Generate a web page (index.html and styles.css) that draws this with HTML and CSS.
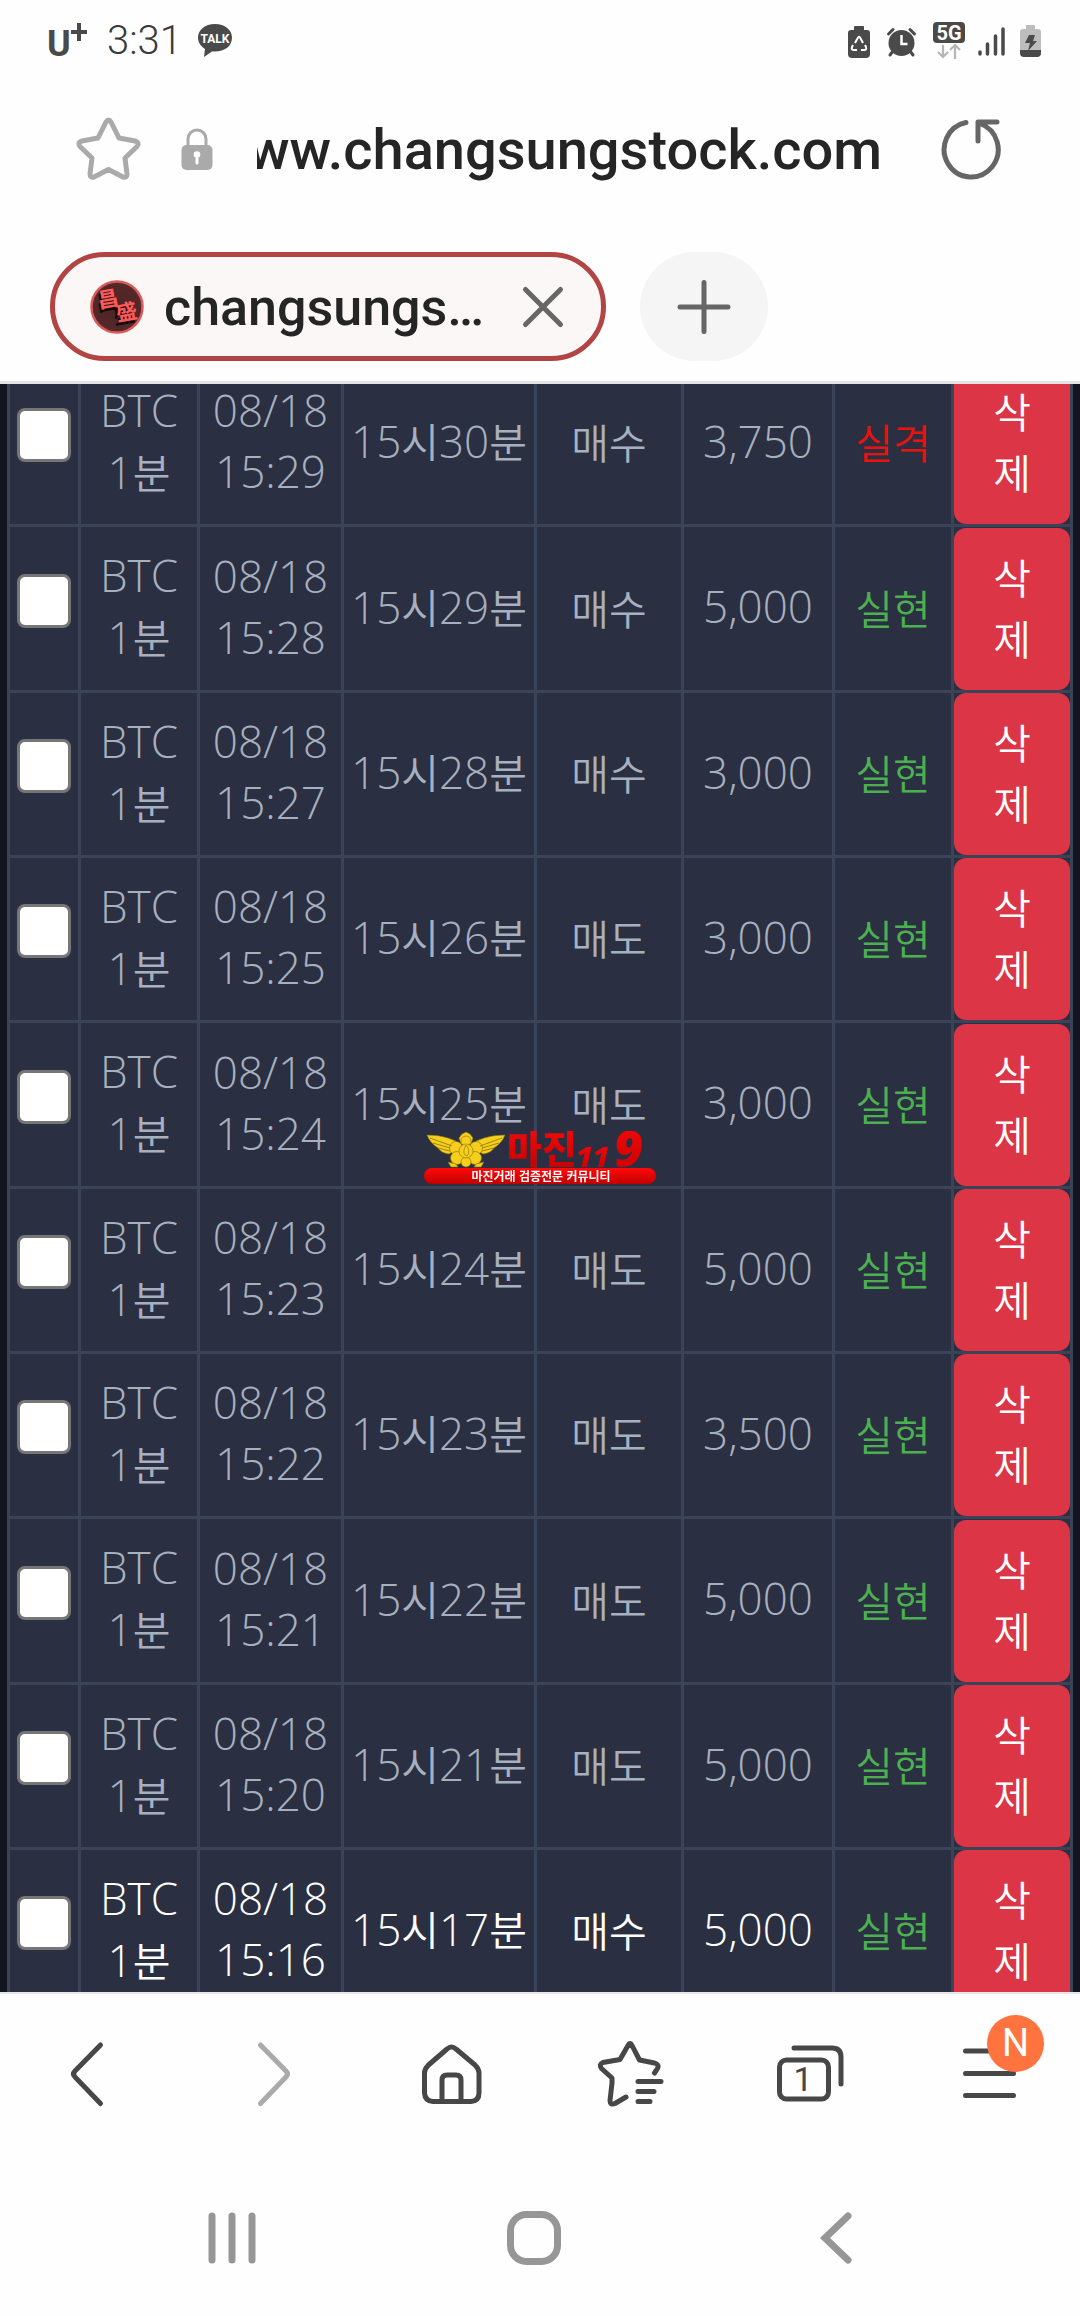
FILE: index.html
```html
<!DOCTYPE html>
<html lang="ko">
<head>
<meta charset="utf-8">
<meta name="viewport" content="width=device-width, initial-scale=1">
<title>changsungstock</title>
<link rel="stylesheet" href="styles.css">
</head>
<body>
<header class="browser-top">
  <div class="status">
    <svg class="carrier" width="44" height="44" viewBox="0 0 44 44" aria-label="U+"><text x="0" y="37" class="carrier-u">U</text><path d="M32 4v18M24 13h16" class="carrier-plus"/></svg>
    <span class="clock">3:31</span>
    <svg class="talk" width="36" height="36" viewBox="0 0 36 36"><path d="M18 1C8 1 1 7 1 14.500c0 5 3 9 7 11.500L7 34l8-5.500c12 1 20-5 20-14C35 7 28 1 18 1z" fill="#4a4a4a"/><text x="18" y="20" class="talk-text">TALK</text></svg>
    <span class="spacer"></span>
    <svg width="200" height="44" viewBox="846 18 200 44">
      <path d="M854 29v-3q0-1 1-1h8q1 0 1 1v3h3q3 0 3 3v21q0 4-4 4h-14q-4 0-4-4V32q0-3 3-3z" fill="#4a4a4a"/>
      <path d="M855 42l3-5.500q1-1.500 2 0l3 5.500M853 44l-1 2q-1 3 2 3h3M865 44l1 2q1 3-2 3h-3" fill="none" stroke="#fff" stroke-width="2"/>
      <circle cx="901.500" cy="42" r="13" fill="#4a4a4a"/><path d="M888.500 33l4.500-4.500M914.500 33l-4.500-4.500M893 50l-3 4M910 50l3 4" stroke="#4a4a4a" stroke-width="3" stroke-linecap="round"/><path d="M901.500 34v9h6" fill="none" stroke="#fff" stroke-width="2.500"/>
      <rect x="933" y="21" width="32" height="21" rx="4" fill="#4a4a4a"/><text x="949" y="39" class="net-text">5G</text>
      <path d="M943 44v12M938 51l5 5 5-5M955 58V45M950 49l5-5 5 5" fill="none" stroke="#b5b5b5" stroke-width="2.200"/>
      <path d="M980 51v2M987.500 43v10M995.500 35v18M1003 28v25" stroke="#4a4a4a" stroke-width="3.500" stroke-linecap="round"/>
      <path d="M1026 28v-3q0-1 1-1h7q1 0 1 1v3h3q3 0 3 3v18h-21V31q0-3 3-3z" fill="#bdbdbd"/><path d="M1020 49h21v3q0 4-4 4h-13q-4 0-4-4z" fill="#4a4a4a"/><path d="M1029 34h6l-2 6h4l-9 10 2-8h-5z" fill="#4a4a4a"/>
    </svg>
  </div>

  <div class="address">
    <button class="icon-btn" aria-label="Bookmark"><svg width="70" height="70" viewBox="0 0 70 70"><path class="star" d="M25 24L33 8q2.500-4 5 0l8 16 16 3q5 1.500 2 5.500L52 44l2 16q0 4-4 3L35.500 55.500 21 63q-4 1-4-3l2-16L7 32.500q-3-4 2-5.500z"/></svg></button>
    <svg class="lock" width="32" height="42" viewBox="0 0 32 42"><path d="M7 20V11a9 9 0 0 1 18 0v9" fill="none" stroke="#aaa" stroke-width="3"/><rect x="0.500" y="17" width="31" height="25" rx="5" fill="#aaa"/><path d="M16 27v8" stroke="#fff" stroke-width="3" stroke-linecap="round"/><circle cx="16" cy="26.500" r="3.300" fill="#fff"/></svg>
    <input class="url" type="text" aria-label="Address" value="www.changsungstock.com">
    <button class="icon-btn reload" aria-label="Reload"><svg width="64" height="64" viewBox="0 0 64 64"><path d="M26 5.500A27 27.500 0 1 0 40 6.500M57 5H38v19" fill="none" stroke="#666" stroke-width="5" stroke-linecap="round" stroke-linejoin="round"/></svg></button>
  </div>

  <div class="tabs">
    <div class="tab">
      <svg width="54" height="54" viewBox="0 0 54 54"><defs><radialGradient id="fav"><stop offset="0" stop-color="#4c2423"/><stop offset="1" stop-color="#55282a"/></radialGradient></defs><circle cx="27" cy="27" r="25.500" fill="url(#fav)" stroke="#d95a5a" stroke-width="2.500"/><g transform="rotate(-10 27 27)"><g class="fav-shadow"><text x="7" y="28">昌</text><text x="22" y="44">盛</text></g><g class="fav-text"><text x="9" y="25">昌</text><text x="25" y="41">盛</text></g></g></svg>
      <span class="tab-title">changsungs…</span>
      <button class="icon-btn" aria-label="Close tab"><svg width="44" height="44" viewBox="0 0 44 44"><path d="M4.500 4.500l35 35M39.500 4.500l-35 35" stroke="#666" stroke-width="5" stroke-linecap="round"/></svg></button>
    </div>
    <button class="new-tab" aria-label="New tab"><svg width="56" height="56" viewBox="0 0 56 56"><path d="M28 3.500v49M4 28h48" stroke="#666" stroke-width="5" stroke-linecap="round"/></svg></button>
  </div>
</header>

<main class="page">
  <table class="orders">
    <colgroup><col class="c-check"><col class="c-item"><col class="c-date"><col class="c-round"><col class="c-side"><col class="c-amount"><col class="c-result"><col class="c-delete"></colgroup>
    <tbody>
      <tr><td class="check"><input type="checkbox" aria-label="15:29"></td><td>BTC<br>1<span class="ko">분</span></td><td>08/18<br>15:29</td><td>15<span class="ko">시</span>30<span class="ko">분</span></td><td class="ko">매수</td><td>3,750</td><td class="ko lose">실격</td><td class="action"><button class="delete">삭<br>제</button></td></tr>
      <tr><td class="check"><input type="checkbox" aria-label="15:28"></td><td>BTC<br>1<span class="ko">분</span></td><td>08/18<br>15:28</td><td>15<span class="ko">시</span>29<span class="ko">분</span></td><td class="ko">매수</td><td>5,000</td><td class="ko win">실현</td><td class="action"><button class="delete">삭<br>제</button></td></tr>
      <tr><td class="check"><input type="checkbox" aria-label="15:27"></td><td>BTC<br>1<span class="ko">분</span></td><td>08/18<br>15:27</td><td>15<span class="ko">시</span>28<span class="ko">분</span></td><td class="ko">매수</td><td>3,000</td><td class="ko win">실현</td><td class="action"><button class="delete">삭<br>제</button></td></tr>
      <tr><td class="check"><input type="checkbox" aria-label="15:25"></td><td>BTC<br>1<span class="ko">분</span></td><td>08/18<br>15:25</td><td>15<span class="ko">시</span>26<span class="ko">분</span></td><td class="ko">매도</td><td>3,000</td><td class="ko win">실현</td><td class="action"><button class="delete">삭<br>제</button></td></tr>
      <tr><td class="check"><input type="checkbox" aria-label="15:24"></td><td>BTC<br>1<span class="ko">분</span></td><td>08/18<br>15:24</td><td>15<span class="ko">시</span>25<span class="ko">분</span></td><td class="ko">매도</td><td>3,000</td><td class="ko win">실현</td><td class="action"><button class="delete">삭<br>제</button></td></tr>
      <tr><td class="check"><input type="checkbox" aria-label="15:23"></td><td>BTC<br>1<span class="ko">분</span></td><td>08/18<br>15:23</td><td>15<span class="ko">시</span>24<span class="ko">분</span></td><td class="ko">매도</td><td>5,000</td><td class="ko win">실현</td><td class="action"><button class="delete">삭<br>제</button></td></tr>
      <tr><td class="check"><input type="checkbox" aria-label="15:22"></td><td>BTC<br>1<span class="ko">분</span></td><td>08/18<br>15:22</td><td>15<span class="ko">시</span>23<span class="ko">분</span></td><td class="ko">매도</td><td>3,500</td><td class="ko win">실현</td><td class="action"><button class="delete">삭<br>제</button></td></tr>
      <tr><td class="check"><input type="checkbox" aria-label="15:21"></td><td>BTC<br>1<span class="ko">분</span></td><td>08/18<br>15:21</td><td>15<span class="ko">시</span>22<span class="ko">분</span></td><td class="ko">매도</td><td>5,000</td><td class="ko win">실현</td><td class="action"><button class="delete">삭<br>제</button></td></tr>
      <tr><td class="check"><input type="checkbox" aria-label="15:20"></td><td>BTC<br>1<span class="ko">분</span></td><td>08/18<br>15:20</td><td>15<span class="ko">시</span>21<span class="ko">분</span></td><td class="ko">매도</td><td>5,000</td><td class="ko win">실현</td><td class="action"><button class="delete">삭<br>제</button></td></tr>
      <tr class="current"><td class="check"><input type="checkbox" aria-label="15:16"></td><td>BTC<br>1<span class="ko">분</span></td><td>08/18<br>15:16</td><td>15<span class="ko">시</span>17<span class="ko">분</span></td><td class="ko">매수</td><td>5,000</td><td class="ko win">실현</td><td class="action"><button class="delete">삭<br>제</button></td></tr>
    </tbody>
  </table>
</main>

<svg class="watermark" width="232" height="54" viewBox="0 0 232 54">
  <defs><linearGradient id="red" x1="0" y1="0" x2="0" y2="1"><stop offset="0" stop-color="#ff0a0a"/><stop offset="1" stop-color="#c00000"/></linearGradient></defs>
  <g fill="#f5cf1b" stroke="#8a7010" stroke-width="0.600">
    <path d="M3 4q12 0 21 3l8 3-1 9-6 4q-8-1-11-6Q6 12 3 4zM81 4q-12 0-21 3l-8 3 1 9 6 4q8-1 11-6 8-5 11-13z"/>
    <path d="M35 7l3-4 4-2 4 2 3 4-2 6H37z"/>
    <circle cx="42" cy="10" r="5"/><circle cx="32" cy="17" r="6.500"/><circle cx="52" cy="17" r="6.500"/><circle cx="33" cy="27" r="6.500"/><circle cx="51" cy="27" r="6.500"/><circle cx="42" cy="31" r="5"/><circle cx="42" cy="20" r="7"/>
    <path d="M42 14q5 6 1 11-6-2-1-11z"/>
    <path d="M24 31l8 2 2 3h-7zM60 31l-8 2-2 3h7z"/>
  </g>
  <path d="M6 7l22 8M9 12l17 5M14 17l12 3M78 7l-22 8M75 12l-17 5M70 17l-12 3" stroke="#8a7010" stroke-width="0.800"/>
  <text x="83" y="32" class="wm-name" fill="url(#red)">마진</text>
  <text x="152" y="36" class="wm-small" fill="url(#red)">11</text>
  <text x="190" y="36" class="wm-big" fill="url(#red)">9</text>
  <rect x="0" y="37" width="232" height="16" rx="8" fill="url(#red)"/>
  <text x="117" y="50" class="wm-sub">마진거래 검증전문 커뮤니티</text>
</svg>

<nav class="toolbar" aria-label="Browser">
  <button class="icon-btn" aria-label="Back"><svg width="80" height="80" viewBox="0 0 80 80"><path d="M50.500 11L25 37q-3 3 0 6l25.500 26.500"/></svg></button>
  <button class="icon-btn faded" aria-label="Forward"><svg width="80" height="80" viewBox="0 0 80 80"><path d="M30.500 11L56 37q3 3 0 6L30.500 69.500"/></svg></button>
  <button class="icon-btn" aria-label="Home"><svg width="80" height="80" viewBox="0 0 80 80"><path d="M37 15q4.500-4 9 0l19 16q4 4 4 8v20q0 8-8 8.500H23q-8-.5-8.500-8.500V39q0-4 4-8zM32 67V46q0-5 5-5h9q5 0 5 5v21"/></svg></button>
  <button class="icon-btn" aria-label="Bookmarks"><svg width="80" height="80" viewBox="0 0 80 80"><path d="M36 63l-11 6.500q-5 2-5-3L22 49v-5L11.500 34.500q-3-4 1.500-6L30 25.500l8-14q2-4 4 0l7.500 14.500 15 3q6 2 2 7l-2 3M48 47.500h23M48 57.500h16M48 67.500h12"/></svg></button>
  <button class="icon-btn" aria-label="Tabs"><svg width="80" height="80" viewBox="0 0 80 80"><rect x="9.500" y="26" width="49" height="39" rx="7"/><path d="M24 14h38q9 0 9 9v27"/><text x="33" y="57" class="tab-count">1</text></svg></button>
  <button class="icon-btn menu" aria-label="Menu"><svg width="80" height="80" viewBox="0 0 80 80"><path d="M15.500 17h48M15.500 39.500h48M15.500 61.500h48"/></svg><span class="badge">N</span></button>
</nav>
<nav class="system" aria-label="System">
  <button class="icon-btn" aria-label="Recents"><svg width="60" height="60" viewBox="0 0 60 60"><path d="M10 8v44M30 8v44M50 8v44"/></svg></button>
  <button class="icon-btn" aria-label="Home screen"><svg width="60" height="60" viewBox="0 0 60 60"><rect x="6.500" y="6.500" width="47" height="47" rx="16"/></svg></button>
  <button class="icon-btn" aria-label="Go back"><svg width="60" height="60" viewBox="0 0 60 60"><path d="M42 8L19 30l23 22"/></svg></button>
</nav>
</body>
</html>
```
FILE: styles.css
```css
* { box-sizing: border-box; }

body {
  margin: 0;
  height: 100vh;
  display: flex;
  flex-direction: column;
  background: #fefefe;
  font-family: Roboto, "Noto Sans CJK KR", sans-serif;
  overflow: hidden;
}

button, input { font: inherit; color: inherit; margin: 0; }
svg { display: block; flex: none; }

.icon-btn {
  display: flex;
  align-items: center;
  justify-content: center;
  padding: 0;
  border: 0;
  background: none;
}

.browser-top { border-bottom: 3px solid #e4e4e4; }

.status {
  display: flex;
  align-items: center;
  height: 82px;
  padding: 0 34px 0 47px;
}
.carrier { margin-right: 16px; }
.carrier-u { font: 700 36px Roboto, sans-serif; fill: #4a4a4a; }
.carrier-plus { stroke: #4a4a4a; stroke-width: 4; }
.clock { font-size: 40px; font-weight: 300; line-height: 48px; color: #3a3a3a; margin-right: 15px; }
.talk-text { font: 700 12px Roboto, sans-serif; fill: #fff; text-anchor: middle; }
.net-text { font: 700 20px Roboto, sans-serif; fill: #fff; text-anchor: middle; }
.spacer { flex: 1; }

.address {
  display: flex;
  align-items: center;
  height: 134px;
  padding: 0 76px 0 73px;
}
.star { fill: none; stroke: #aaa; stroke-width: 5; stroke-linejoin: round; }
.lock { margin: 0 44px 0 38px; }
.url {
  flex: 1;
  min-width: 0;
  height: 80px;
  padding: 2px 0 0;
  border: 0;
  outline: 0;
  background: none;
  color: #252525;
  font-size: 56px;
  font-weight: 500;
  direction: rtl;
}
.reload { margin-left: 58px; }

.tabs {
  display: flex;
  gap: 34px;
  padding: 36px 50px 20px;
}
.tab {
  display: flex;
  align-items: center;
  width: 556px;
  height: 109px;
  padding: 0 36px 0 35px;
  border: 5px solid #b34444;
  border-radius: 55px;
  background: #fbf7f7;
}
.fav-text, .fav-shadow { font: 700 21px "Noto Sans CJK KR", sans-serif; fill: #ff5a5a; }
.fav-shadow { fill: #160808; }
.tab-title {
  flex: 1;
  padding: 2px 0 0 20px;
  font-size: 52px;
  line-height: 60px;
  font-weight: 500;
  color: #252525;
  white-space: nowrap;
}
.new-tab {
  display: flex;
  align-items: center;
  justify-content: center;
  width: 128px;
  height: 109px;
  padding: 0;
  border: 0;
  border-radius: 55px;
  background: #f5f5f5;
}

.page {
  flex: 1;
  min-height: 0;
  overflow: hidden;
  padding: 0 7px;
  background: #12151f;
}
.orders {
  width: 100%;
  margin-top: -25px;
  table-layout: fixed;
  border-collapse: separate;
  border-spacing: 3px;
  background: #3b4358;
  color: #a7b0bf;
  font: 350 44px/61px "Open Sans", "Noto Sans CJK KR", sans-serif;
  text-align: center;
}
.c-check { width: 68px; }
.c-item { width: 116px; }
.c-date { width: 141px; }
.c-round { width: 190px; }
.c-side { width: 144px; }
.c-amount { width: 148px; }
.c-result { width: 116px; }
.c-delete { width: 116px; }
.orders td {
  height: 162px;
  padding: 0 0 4px;
  background: #2b2f42;
  vertical-align: middle;
  white-space: nowrap;
}
.orders tr:nth-child(3n + 2) td { height: 163px; }
.orders .current td { color: #fff; }
.orders td.check { padding-bottom: 16px; }
.orders td.action { padding-bottom: 0; }
.check input {
  appearance: none;
  display: block;
  width: 54px;
  height: 54px;
  margin: 0 auto;
  border: 3px solid #767676;
  border-radius: 8px;
  background: #fff;
}
.ko { font-family: "Noto Sans CJK KR", sans-serif; font-size: 41px; line-height: 60px; }
.orders td.win { color: #4caf50; }
.orders td.lose { color: #e8120f; }
.delete {
  display: block;
  width: 100%;
  height: 162px;
  padding: 0 0 4px;
  border: 0;
  border-radius: 12px;
  background: #dc3545;
  color: #fff;
  font: 350 41px/61px "Noto Sans CJK KR", sans-serif;
}

.watermark {
  position: fixed;
  top: 50%;
  left: 50%;
  transform: translate(-50%, -50%);
}
.wm-name { font: 900 38px "Noto Sans CJK KR", sans-serif; }
.wm-small { font: italic 800 29px "Open Sans", sans-serif; }
.wm-big { font: italic 800 50px "Open Sans", sans-serif; }
.wm-sub { font: 700 12px "Noto Sans CJK KR", sans-serif; fill: #fff; text-anchor: middle; }

.toolbar {
  display: grid;
  grid-template-columns: repeat(6, 1fr);
  height: 162px;
  border-top: 2px solid #e6e6ea;
}
.toolbar svg { fill: none; stroke: #474747; stroke-width: 5; stroke-linecap: round; stroke-linejoin: round; }
.toolbar .faded svg { stroke: #aaa; }
.toolbar .tab-count { font: 400 34px Roboto, sans-serif; fill: #474747; stroke: none; text-anchor: middle; }
.menu { position: relative; }
.badge {
  position: absolute;
  left: 50%;
  top: 50%;
  width: 57px;
  height: 57px;
  margin: -59px 0 0 -3px;
  border-radius: 50%;
  background: #ff733f;
  color: #fff;
  font-size: 38px;
  line-height: 57px;
  text-align: center;
}

.system {
  display: grid;
  grid-template-columns: repeat(3, 1fr);
  height: 162px;
  padding: 6px 93px 0 81px;
}
.system svg { fill: none; stroke: #969696; stroke-width: 7; stroke-linecap: round; }
```
